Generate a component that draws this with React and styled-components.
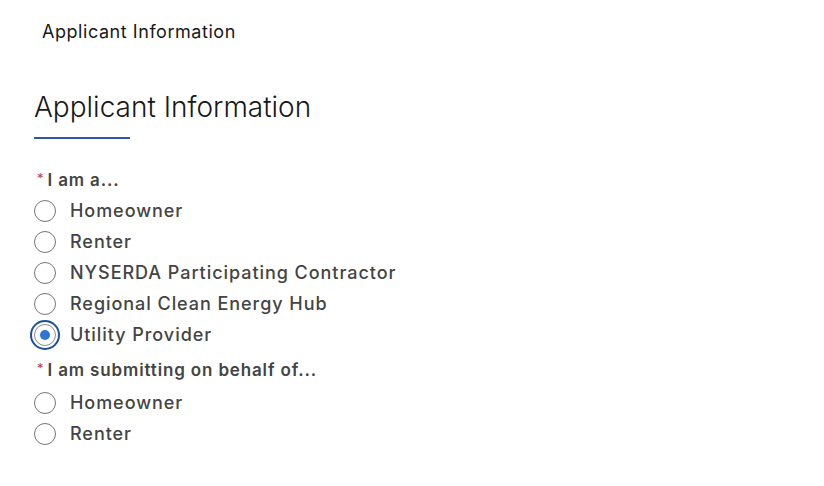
import React, { useState } from "react";
import styled, { createGlobalStyle } from "styled-components";

const GlobalStyle = createGlobalStyle`
  body {
    margin: 0;
    background: #ffffff;
    font-family: Inter, "Noto Sans", sans-serif;
    -webkit-font-smoothing: antialiased;
  }
`;

const Page = styled.div`
  width: 824px;
  height: 486px;
  box-sizing: border-box;
  padding: 21px 0 0 34px;
`;

const TopTitle = styled.div`
  padding-left: 8px;
  font-size: 18px;
  line-height: 22px;
  color: #181818;
  letter-spacing: 0.55px;
`;

const Heading = styled.h2`
  margin: 47px 0 0;
  font-size: 28px;
  font-weight: 300;
  line-height: 34px;
  color: #181818;
  letter-spacing: 0;
`;

const Underline = styled.div`
  width: 96px;
  height: 2px;
  margin-top: 13px;
  background: #3356a6;
`;

const Field = styled.fieldset`
  border: 0;
  margin: 0;
  padding: 0;
  margin-top: ${(p) => p.$top}px;
`;

const Legend = styled.legend`
  padding: 0;
  font-size: 17px;
  font-weight: 600;
  line-height: 20px;
  color: #444444;
  display: flex;
  align-items: flex-start;
  margin-left: 3px;
  letter-spacing: 0.85px;
`;

const Star = styled.span`
  color: #c23934;
  font-size: 13px;
  font-weight: 400;
  margin-right: 4px;
  line-height: 16px;
  letter-spacing: 0;
`;

const Options = styled.div`
  display: flex;
  flex-direction: column;
  margin-top: ${(p) => p.$top}px;
`;

const Option = styled.label`
  display: flex;
  align-items: center;
  height: 31px;
  gap: 14px;
  font-size: 18px;
  font-weight: 500;
  color: #444444;
  letter-spacing: 0.95px;
  cursor: pointer;
`;

const Circle = styled.span`
  flex: none;
  width: 22px;
  height: 22px;
  box-sizing: border-box;
  border-radius: 50%;
  border: 1px solid ${(p) => (p.$on ? "#8e8e8e" : "#767676")};
  display: flex;
  align-items: center;
  justify-content: center;
  background: #fff;
  box-shadow: ${(p) => (p.$on ? "0 0 0 2px #fff, 0 0 0 4px #1b5297" : "none")};

  &::after {
    content: "";
    display: ${(p) => (p.$on ? "block" : "none")};
    width: 10px;
    height: 10px;
    border-radius: 50%;
    background: #2f75d6;
  }
`;

function RadioGroup({ label, options, value, onChange, top, gap }) {
  return (
    <Field $top={top}>
      <Legend>
        <Star>*</Star>
        {label}
      </Legend>
      <Options $top={gap}>
        {options.map((o) => (
          <Option key={o} onClick={() => onChange(o)}>
            <Circle $on={value === o} />
            {o}
          </Option>
        ))}
      </Options>
    </Field>
  );
}

export default function App() {
  const [role, setRole] = useState("Utility Provider");
  const [behalf, setBehalf] = useState("");

  return (
    <>
      <GlobalStyle />
      <Page>
        <TopTitle>Applicant Information</TopTitle>
        <Heading>Applicant Information</Heading>
        <Underline />
        <RadioGroup
          top={31}
          gap={5}
          label="I am a..."
          value={role}
          onChange={setRole}
          options={[
            "Homeowner",
            "Renter",
            "NYSERDA Participating Contractor",
            "Regional Clean Energy Hub",
            "Utility Provider",
          ]}
        />
        <RadioGroup
          top={10}
          gap={7}
          label="I am submitting on behalf of..."
          value={behalf}
          onChange={setBehalf}
          options={["Homeowner", "Renter"]}
        />
      </Page>
    </>
  );
}
